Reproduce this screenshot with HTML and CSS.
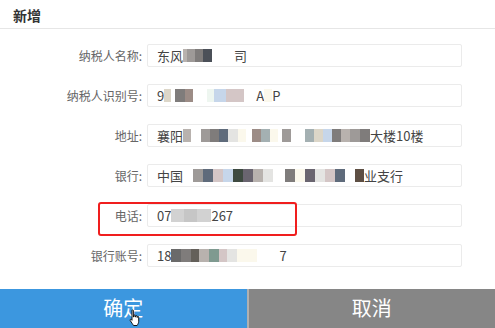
FILE: index.html
```html
<!DOCTYPE html>
<html lang="zh-CN">

<head>
  <meta charset="UTF-8">
  <meta name="viewport" content="width=device-width, initial-scale=1.0">
  <title>新增</title>
  <link rel="stylesheet" href="styles.css">
</head>

<body>
  <div class="dialog">
    <div class="header">新增</div>

    <div class="form">
      <div class="row">
        <label>纳税人名称:</label>
        <div class="input">东风<i class="m m-a w4"></i><i class="m m-g1 w8"></i><i class="m m-g2 w8"></i><i class="m m-dk w9"></i><i class="m m-w w22"></i>司</div>
      </div>
      <div class="row">
        <label>纳税人识别号:</label>
        <div class="input">9<i class="m m-bg w7"></i><i class="m m-w w4"></i><i class="m m-g2 w10"></i><i class="m m-br w8"></i><i class="m m-w w14"></i><i class="m m-mint w7"></i><i class="m m-sky w12"></i><i class="m m-rose w18"></i><i class="m m-w w12"></i>A<i class="m m-cr w8"></i>P</div>
      </div>
      <div class="row">
        <label>地址:</label>
        <div class="input">襄阳<i class="m m-a w8"></i><i class="m m-w w10"></i><i class="m m-g1 w9"></i><i class="m m-g2 w9"></i><i class="m m-sl w9"></i><i class="m m-lt w10"></i><i class="m m-cr w8"></i><i class="m m-w w6"></i><i class="m m-br w9"></i><i class="m m-tl w9"></i><i class="m m-cr w8"></i><i class="m m-w w4"></i><i class="m m-g1 w9"></i><i class="m m-w w14"></i><i class="m m-tl w9"></i><i class="m m-bg w9"></i><i class="m m-sky w9"></i><i class="m m-g2 w9"></i><i class="m m-a w9"></i><i class="m m-g1 w10"></i><i class="m m-g2 w10"></i>大楼10楼</div>
      </div>
      <div class="row">
        <label>银行:</label>
        <div class="input">中国<i class="m m-w w10"></i><i class="m m-g1 w10"></i><i class="m m-sl w10"></i><i class="m m-rose w10"></i><i class="m m-sky w10"></i><i class="m m-dkg w10"></i><i class="m m-pu w10"></i><i class="m m-a w10"></i><i class="m m-lt w10"></i><i class="m m-w w12"></i><i class="m m-g2 w10"></i><i class="m m-cr w10"></i><i class="m m-pu w10"></i><i class="m m-lt w10"></i><i class="m m-rose w10"></i><i class="m m-sl w10"></i><i class="m m-w w10"></i><i class="m m-brd w9"></i>业支行</div>
      </div>
      <div class="row">
        <label>电话:</label>
        <div class="input">07<i class="m m-lt2 w13"></i><i class="m m-lt3 w13"></i><i class="m m-lt2 w14"></i>267</div>
        <div class="mark"></div>
      </div>
      <div class="row">
        <label>银行账号:</label>
        <div class="input">18<i class="m m-dk2 w10"></i><i class="m m-g2 w10"></i><i class="m m-brd2 w8"></i><i class="m m-a w10"></i><i class="m m-tl2 w10"></i><i class="m m-rose w8"></i><i class="m m-lt w10"></i><i class="m m-cr w20"></i><i class="m m-w w22"></i>7</div>
      </div>
    </div>

    <div class="actions">
      <button class="ok">确定
        <svg class="cursor" width="12" height="17" viewBox="0 0 12 17">
          <path d="M3 1.5c0-.8 1.4-.8 1.4 0V8h.4V6.6c0-.8 1.4-.8 1.4 0V8h.4V7.2c0-.8 1.4-.8 1.4 0V8.4h.3V8c0-.8 1.4-.8 1.4 0v4.3c0 1.8-1 3.2-1.6 4.2H4.6C3.8 15.5 2.6 13.6 1.2 11.5c-.5-.8.5-1.6 1.2-.9l.6.7z" fill="#fff" stroke="#000" stroke-width=".9" />
        </svg>
      </button>
      <button class="cancel">取消</button>
    </div>
  </div>
</body>

</html>
```

FILE: styles.css
```css
* {
  margin: 0;
  padding: 0;
  box-sizing: border-box;
}

body {
  background: #fff;
  font-family: "Noto Sans CJK SC", "Noto Sans", sans-serif;
  overflow: hidden;
}

.dialog {
  width: 495px;
  height: 328px;
  display: flex;
  flex-direction: column;
}

.header {
  height: 30px;
  padding: 5px 0 0 13px;
  font-size: 14px;
  font-weight: bold;
  color: #333;
  border-bottom: 1px solid #e6e6e6;
}

.form {
  display: flex;
  flex-direction: column;
  gap: 17px;
  padding-top: 15px;
}

.row {
  display: flex;
  align-items: center;
  position: relative;
}

.row label {
  width: 143px;
  padding-right: 1px;
  text-align: right;
  font-size: 12px;
  color: #666;
}

.input {
  margin-left: 4px;
  width: 315px;
  height: 23px;
  border: 1px solid #ebebeb;
  border-radius: 2px;
  padding-left: 9px;
  display: flex;
  align-items: center;
  font-size: 13px;
  color: #444;
  white-space: nowrap;
  overflow: hidden;
}

/* mosaic blur blocks */
.m {
  display: inline-block;
  height: 13px;
}

.m-w { background: #fff; }
.m-a { background: #b8b2ae; }
.m-g1 { background: #9e9a98; }
.m-g2 { background: #7f7c7b; }
.m-dk { background: #4b5058; }
.m-dk2 { background: #6a6a6a; }
.m-dkg { background: #3e4a40; }
.m-bg { background: #dcd6c8; }
.m-br { background: #9c8c86; }
.m-brd { background: #5e4f44; }
.m-brd2 { background: #64605a; }
.m-mint { background: #eef6f0; }
.m-sky { background: #c6d6ea; }
.m-rose { background: #d4c6c6; }
.m-cr { background: #fbf8ec; }
.m-sl { background: #5f6b7b; }
.m-lt { background: #e4e4e2; }
.m-lt2 { background: #d2d2d2; }
.m-lt3 { background: #c6c6c6; }
.m-tl { background: #a4b0b2; }
.m-tl2 { background: #7f9a90; }
.m-pu { background: #6a6570; }

.w4 { width: 4px; }
.w5 { width: 5px; }
.w6 { width: 6px; }
.w7 { width: 7px; }
.w8 { width: 8px; }
.w9 { width: 9px; }
.w10 { width: 10px; }
.w12 { width: 12px; }
.w13 { width: 13px; }
.w14 { width: 14px; }
.w18 { width: 18px; }
.w20 { width: 20px; }
.w22 { width: 22px; }

.mark {
  position: absolute;
  left: 98px;
  top: -2px;
  width: 199px;
  height: 34px;
  border: 2px solid #f01e1e;
  border-radius: 3px;
}

.actions {
  margin-top: 22px;
  display: flex;
  height: 40px;
}

.actions button {
  flex: 1;
  border: none;
  font-family: inherit;
  font-size: 20px;
  color: #fff;
  padding-bottom: 2px;
  position: relative;
}

.ok {
  background: #3c97df;
}

.cancel {
  background: #868686;
  border-left: 2px solid #b0b0b0 !important;
}

.cursor {
  position: absolute;
  left: 129px;
  top: 20px;
}
```
